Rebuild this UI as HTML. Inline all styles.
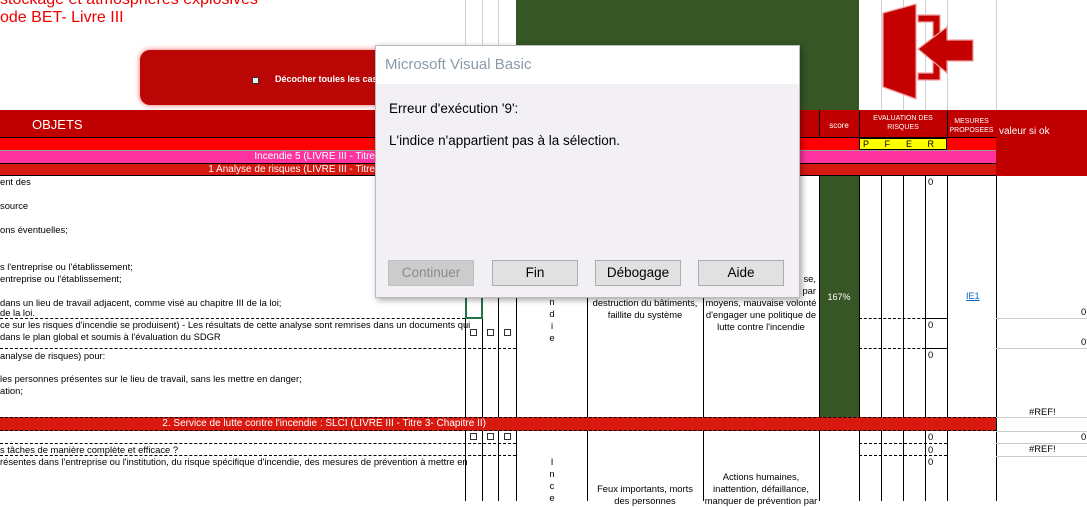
<!DOCTYPE html>
<html><head><meta charset="utf-8"><style>
*{margin:0;padding:0;box-sizing:border-box}
body{width:1087px;height:501px;overflow:hidden;background:#fff;position:relative;font-family:"Liberation Sans",sans-serif}
.a{position:absolute}
.t{position:absolute;font-size:9.4px;color:#000;white-space:nowrap;line-height:12px}
.v{position:absolute;top:176px;height:325px;width:1px;background:#000}
.g{position:absolute;top:0;height:110px;width:1px;background:#d0d0d0}
.h{position:absolute;height:0;border-top:1px dashed #000}
.c{position:absolute;text-align:center;font-size:9.4px;line-height:12px;white-space:nowrap}
.w{color:#fff}
.btn{position:absolute;top:260px;height:26px;width:86px;background:#e1e1e1;border:1px solid #adadad;font-size:13.5px;text-align:center;line-height:24px}
.cb{position:absolute;width:7px;height:7px;border:1px solid #333;background:#fff}
</style></head><body>
<div class="a" style="left:0;top:-9px;font-size:16px;color:#e00;white-space:nowrap">stockage et atmosphères explosives</div>
<div class="a" style="left:0;top:9px;font-size:16px;color:#e00;white-space:nowrap">ode BET- Livre III</div>
<div class="g" style="left:465px"></div><div class="g" style="left:482px"></div><div class="g" style="left:498px"></div>
<div class="g" style="left:881px"></div><div class="g" style="left:903px"></div><div class="g" style="left:925px"></div><div class="g" style="left:947px"></div><div class="g" style="left:996px"></div>
<div class="a" style="left:516px;top:0;width:303px;height:110px;background:#365626"></div>
<div class="a" style="left:819px;top:0;width:40px;height:417px;background:#365626"></div>
<div class="a" style="left:140px;top:50px;width:260px;height:55px;background:#bb0606;border-radius:10px;box-shadow:0 0 6px #e66"></div>
<div class="cb" style="left:252px;top:77px;background:#eee"></div>
<div class="a" style="left:275px;top:74px;font-size:9px;font-weight:bold;color:#fff;white-space:nowrap">Décocher toules les cases</div>
<svg class="a" style="left:878px;top:0" width="100" height="105" viewBox="0 0 100 105"><g fill="#c40000" stroke="#f0a0a0" stroke-width="1.2"><polygon points="5,13 38,4 38,99 5,87"/><polygon points="40,15 62,15 62,80 40,80 40,73 55,73 55,22 40,22"/><polygon points="40,49 69,27 69,40 95,40 95,61 69,61 69,73"/></g></svg>
<div class="a" style="left:0;top:110px;width:1087px;height:28px;background:#c00000"></div>
<div class="a w" style="left:32px;top:117px;font-size:13px">OBJETS</div>
<div class="c w" style="left:819px;top:120px;width:40px;font-size:8px">score</div>
<div class="c w" style="left:859px;top:114px;width:88px;font-size:7px;line-height:9px">EVALUATION DES<br>RISQUES</div>
<div class="c w" style="left:947px;top:117px;width:49px;font-size:7px;line-height:9px">MESURES<br>PROPOSEES</div>
<div class="a w" style="left:999px;top:126px;font-size:10px">valeur si ok</div>
<div class="a" style="left:819px;top:110px;width:1px;height:28px;background:#000"></div>
<div class="a" style="left:859px;top:110px;width:1px;height:28px;background:#000"></div>
<div class="a" style="left:947px;top:110px;width:1px;height:28px;background:#000"></div>
<div class="a" style="left:0;top:137px;width:996px;height:13px;background:#ff0000;border-top:1px solid #000"></div>
<div class="a" style="left:996px;top:138px;width:91px;height:38px;background:#c00000"></div>
<div class="a" style="left:859px;top:138px;width:88px;height:12px;background:#ffff00;border:1px solid #000;font-size:9px;line-height:10px;display:flex"><span style="width:22px;padding-left:3px">P</span><span style="width:22px;padding-left:3px">F</span><span style="width:22px;padding-left:3px">E</span><span style="width:22px;padding-left:3px">R</span></div>
<div class="a" style="left:0;top:150px;width:996px;height:13px;background:#ff33a0;border-top:1px solid #999"></div>
<div class="a" style="left:0;top:163px;width:996px;height:13px;background:#d7190f;border-top:1px solid #000;border-bottom:1px solid #000"></div>
<div class="a" style="left:0;top:150px;width:375px;text-align:right;font-size:10px;color:#fff;line-height:14px">Incendie 5 (LIVRE III - Titre</div>
<div class="a" style="left:0;top:163px;width:375px;text-align:right;font-size:10px;color:#fff;line-height:14px">1 Analyse de risques (LIVRE III - Titre</div>
<div class="v" style="left:465px"></div><div class="v" style="left:482px"></div><div class="v" style="left:498px"></div><div class="v" style="left:516px"></div>
<div class="v" style="left:587px"></div><div class="v" style="left:703px"></div><div class="v" style="left:819px"></div><div class="v" style="left:859px"></div>
<div class="v" style="left:881px"></div><div class="v" style="left:903px"></div><div class="v" style="left:925px"></div><div class="v" style="left:947px"></div><div class="v" style="left:996px"></div>
<div class="h" style="left:0;top:318px;width:465px"></div><div class="h" style="left:859px;top:318px;width:66px"></div>
<div class="h" style="left:0;top:348px;width:516px"></div><div class="h" style="left:859px;top:348px;width:66px"></div>
<div class="h" style="left:0;top:443px;width:516px"></div><div class="h" style="left:859px;top:443px;width:88px"></div>
<div class="h" style="left:0;top:455px;width:516px"></div><div class="h" style="left:859px;top:455px;width:88px"></div>
<div class="a" style="left:925px;top:318px;width:22px;height:1px;background:#000"></div>
<div class="a" style="left:925px;top:348px;width:22px;height:1px;background:#000"></div>
<div class="a" style="left:996px;top:318px;width:91px;height:1px;background:#ccc"></div>
<div class="a" style="left:996px;top:348px;width:91px;height:1px;background:#ccc"></div>
<div class="a" style="left:996px;top:417px;width:91px;height:1px;background:#ccc"></div>
<div class="a" style="left:996px;top:431px;width:91px;height:1px;background:#ccc"></div>
<div class="a" style="left:996px;top:443px;width:91px;height:1px;background:#ccc"></div>
<div class="a" style="left:996px;top:456px;width:91px;height:1px;background:#ccc"></div>
<div class="a" style="left:0;top:417px;width:996px;height:14px;background:#d7190f;border-top:1px dashed #000;border-bottom:1px dashed #000"></div>
<div class="a" style="left:0;top:417px;width:486px;text-align:right;font-size:10px;color:#fff;line-height:14px">2. Service de lutte contre l'incendie : SLCI (LIVRE III - Titre 3- Chapitre II)</div>
<div class="a" style="left:465px;top:298px;width:18px;height:21px;border:2px solid #217346;border-top:none"></div>
<div class="t" style="left:0;top:176px">ent des</div>
<div class="t" style="left:0;top:200px">source</div>
<div class="t" style="left:0;top:224px">ons éventuelles;</div>
<div class="t" style="left:0;top:261px">s l'entreprise ou l'établissement;</div>
<div class="t" style="left:0;top:273px">entreprise ou l'établissement;</div>
<div class="t" style="left:0;top:297px">dans un lieu de travail adjacent, comme visé au chapitre III de la loi;</div>
<div class="t" style="left:0;top:307px">de la loi.</div>
<div class="t" style="left:0;top:319px">ce sur les risques d'incendie se produisent) - Les résultats de cette analyse sont remrises dans un documents qui</div>
<div class="t" style="left:0;top:331px">dans le plan global et soumis à l'évaluation du SDGR</div>
<div class="t" style="left:0;top:350px">analyse de risques) pour:</div>
<div class="t" style="left:0;top:373px">les personnes présentes sur le lieu de travail, sans les mettre en danger;</div>
<div class="t" style="left:0;top:385px">ation;</div>
<div class="t" style="left:0;top:444px">s tâches de manière complète et efficace ?</div>
<div class="t" style="left:0;top:456px">résentes dans l'entreprise ou l'institution, du risque spécifique d'incendie, des mesures de prévention à mettre en</div>
<div class="cb" style="left:470px;top:329px"></div><div class="cb" style="left:487px;top:329px"></div><div class="cb" style="left:504px;top:329px"></div>
<div class="cb" style="left:470px;top:433px"></div><div class="cb" style="left:487px;top:433px"></div><div class="cb" style="left:504px;top:433px"></div>
<div class="c" style="left:546px;top:296px;width:12px">n<br>d<br>i<br>e</div>
<div class="c" style="left:546px;top:456px;width:12px">I<br>n<br>c<br>e</div>
<div class="c" style="left:587px;top:297px;width:116px">destruction du bâtiments,<br>faillite du système</div>
<div class="c" style="left:703px;top:273px;width:116px;text-align:right;padding-right:3px">se,<br>par<br></div>
<div class="c" style="left:703px;top:297px;width:116px">moyens, mauvaise volonté<br>d'engager une politique de<br>lutte contre l'incendie</div>
<div class="c" style="left:587px;top:483px;width:116px">Feux importants, morts<br>des personnes</div>
<div class="c" style="left:703px;top:471px;width:116px">Actions humaines,<br>inattention, défaillance,<br>manquer de prévention par</div>
<div class="c w" style="left:819px;top:291px;width:40px;font-size:9px">167%</div>
<div class="a" style="left:966px;top:291px;font-size:9px;color:#0563c1;text-decoration:underline">IE1</div>
<div class="t" style="left:928px;top:176px">0</div><div class="t" style="left:928px;top:319px">0</div><div class="t" style="left:928px;top:349px">0</div>
<div class="t" style="left:928px;top:431px">0</div><div class="t" style="left:928px;top:444px">0</div><div class="t" style="left:928px;top:456px">0</div>
<div class="t" style="left:1081px;top:306px">0</div><div class="t" style="left:1081px;top:336px">0</div><div class="t" style="left:1081px;top:431px">0</div>
<div class="t" style="left:1029px;top:406px">#REF!</div><div class="t" style="left:1029px;top:443px">#REF!</div>
<div class="a" style="left:375px;top:45px;width:425px;height:253px;background:#f2f0f4;border:1px solid #bbb;box-shadow:2px 2px 6px rgba(0,0,0,.35)">
<div style="height:38px;background:#fff;padding:10px 0 0 9px;font-size:15px;color:#8c9aa6">Microsoft Visual Basic</div>
</div>
<div class="a" style="left:389px;top:101px;font-size:13.5px">Erreur d'exécution '9':</div>
<div class="a" style="left:389px;top:133px;font-size:13.5px">L'indice n'appartient pas à la sélection.</div>
<div class="btn" style="left:388px;background:#ccc;color:#8a8a8a;border-color:#bfbfbf">Continuer</div>
<div class="btn" style="left:492px">Fin</div>
<div class="btn" style="left:595px">Débogage</div>
<div class="btn" style="left:698px">Aide</div>
</body></html>
